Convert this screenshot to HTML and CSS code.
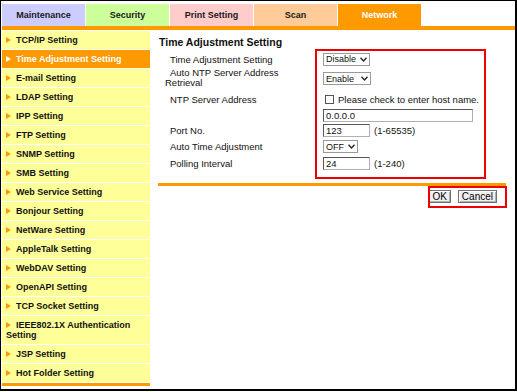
FILE: index.html
```html
<!DOCTYPE html>
<html>
<head>
	<title>Network - Time Adjustment Setting</title>
	<link rel="stylesheet" href="styles.css">
</head>
<body>
<div class="frame">
	<div class="tabs">
		<div class="tab maint">Maintenance</div>
		<div class="tab secu">Security</div>
		<div class="tab print">Print Setting</div>
		<div class="tab scan">Scan</div>
		<div class="tab net">Network</div>
	</div>
	<div class="tabline"></div>
	<div class="main">
		<ul class="side">
			<li><span class="arrow"></span>TCP/IP Setting</li>
			<li class="on"><span class="arrow"></span>Time Adjustment Setting</li>
			<li><span class="arrow"></span>E-mail Setting</li>
			<li><span class="arrow"></span>LDAP Setting</li>
			<li><span class="arrow"></span>IPP Setting</li>
			<li><span class="arrow"></span>FTP Setting</li>
			<li><span class="arrow"></span>SNMP Setting</li>
			<li><span class="arrow"></span>SMB Setting</li>
			<li><span class="arrow"></span>Web Service Setting</li>
			<li><span class="arrow"></span>Bonjour Setting</li>
			<li><span class="arrow"></span>NetWare Setting</li>
			<li><span class="arrow"></span>AppleTalk Setting</li>
			<li><span class="arrow"></span>WebDAV Setting</li>
			<li><span class="arrow"></span>OpenAPI Setting</li>
			<li><span class="arrow"></span>TCP Socket Setting</li>
			<li><span class="arrow"></span>IEEE802.1X Authentication Setting</li>
			<li><span class="arrow"></span>JSP Setting</li>
			<li><span class="arrow"></span>Hot Folder Setting</li>
		</ul>
		<div class="content">
			<h2>Time Adjustment Setting</h2>
			<div class="form">
				<div class="lbl r1">Time Adjustment Setting</div>
				<div class="val r1"><span class="sel w47">Disable<svg width="7" height="5" viewBox="0 0 7 5"><path d="M0.5 0.7 L3.5 4 L6.5 0.7" fill="none" stroke="#222" stroke-width="1.3"/></svg></span></div>

				<div class="lbl r2 two">Auto NTP Server Address<br>Retrieval</div>
				<div class="val r2"><span class="sel w48">Enable<svg width="7" height="5" viewBox="0 0 7 5"><path d="M0.5 0.7 L3.5 4 L6.5 0.7" fill="none" stroke="#222" stroke-width="1.3"/></svg></span></div>

				<div class="lbl r3">NTP Server Address</div>
				<div class="val r3"><span class="chk"></span>Please check to enter host name.</div>

				<div class="lbl r4"></div>
				<div class="val r4"><input class="txt w150" value="0.0.0.0"></div>

				<div class="lbl r5">Port No.</div>
				<div class="val r5"><input class="txt w47" value="123"><span class="hint">(1-65535)</span></div>

				<div class="lbl r6">Auto Time Adjustment</div>
				<div class="val r6"><span class="sel w35">OFF<svg width="7" height="5" viewBox="0 0 7 5"><path d="M0.5 0.7 L3.5 4 L6.5 0.7" fill="none" stroke="#222" stroke-width="1.3"/></svg></span></div>

				<div class="lbl r7">Polling Interval</div>
				<div class="val r7"><input class="txt w47" value="24"><span class="hint">(1-240)</span></div>

				<div class="mark box1"></div>
			</div>
			<div class="rule"></div>
			<div class="btns">
				<button class="btn">OK</button>
				<button class="btn">Cancel</button>
				<div class="mark box2"></div>
			</div>
		</div>
	</div>
</div>
</body>
</html>
```
FILE: styles.css
```css
body{
	margin: 0;
	font-family: "Liberation Sans", Arial, sans-serif;
	color: #111;
}
.frame{
	width: 517px;
	height: 391px;
	box-sizing: border-box;
	border-style: solid;
	border-color: #000;
	border-width: 1px 2px 2px 1px;
	padding: 3px 0 0 1px;
	background: #fff;
	overflow: hidden;
}
.tabs{
	display: flex;
	gap: 1px;
	height: 22px;
}
.tab{
	width: 83px;
	line-height: 22px;
	text-align: center;
	font-size: 9px;
	font-weight: bold;
	color: #1a1a1a;
}
.maint{ background: #ccccff; }
.secu{ background: #ccff99; }
.print{ background: #ffcccc; }
.scan{ background: #ffcc99; }
.net{ background: #ff9900; color: #fff; }
.tabline{
	height: 4px;
	background: #ff9900;
}
.main{
	display: flex;
	padding-top: 1px;
}
.side{
	list-style: none;
	margin: 0;
	padding: 0;
	width: 148px;
	border-bottom: 3px solid #ff9900;
	align-self: flex-start;
}
.side li{
	background: #ffff99;
	margin-bottom: 1px;
	padding: 4px 2px 4px 4px;
	line-height: 10px;
	font-size: 9px;
	font-weight: bold;
	color: #111;
}
.arrow{
	display: inline-block;
	width: 0;
	height: 0;
	border-left: 5px solid #ff9900;
	border-top: 3.5px solid transparent;
	border-bottom: 3.5px solid transparent;
	margin-right: 5px;
	vertical-align: 0;
}
.side li.on{
	background: #ff9900;
	color: #fff;
}
.side li.on .arrow{
	border-left-color: #fff;
}
.content{
	width: 348px;
	padding: 5px 0 0 8px;
}
.content h2{
	margin: 0 0 0 1px;
	font-size: 10.5px;
	line-height: 13px;
	color: #111;
}
.form{
	position: relative;
	display: grid;
	grid-template-columns: 158px auto;
	grid-template-rows: 18px 21px 20px 13px 16px 17px 16px;
	margin: 1px 0 0 7px;
	font-size: 9.5px;
}
.lbl, .val{
	display: flex;
	align-items: center;
}
.lbl{
	padding-left: 5px;
}
.lbl.two{
	display: block;
	padding-left: 0;
	text-indent: 5px;
	line-height: 10px;
}
.sel{
	display: inline-flex;
	align-items: center;
	justify-content: space-between;
	box-sizing: border-box;
	height: 13px;
	padding: 0 2px 0 2px;
	border: 1px solid #9a9a9a;
	background: #fff;
	font-size: 9px;
}
.w47{ width: 47px; }
.w48{ width: 48px; }
.w35{ width: 35px; }
.w150{ width: 150px; }
.txt{
	box-sizing: border-box;
	height: 13px;
	margin: 0;
	padding: 0 2px;
	border: 1px solid;
	border-color: #555 #b0b0b0 #b0b0b0 #555;
	font-family: "Liberation Sans", Arial, sans-serif;
	font-size: 9.5px;
	color: #111;
}
.hint{
	margin-left: 4px;
}
.chk{
	display: inline-block;
	width: 9px;
	height: 9px;
	box-sizing: border-box;
	border: 1px solid #555;
	margin: 0 4px 0 2px;
}
.mark{
	position: absolute;
	border: 2px solid #ee0000;
	box-sizing: border-box;
}
.box1{
	left: 150px;
	top: -1px;
	width: 171px;
	height: 130px;
}
.rule{
	height: 3px;
	margin-top: 12px;
	background: #ff9900;
}
.btns{
	position: relative;
	display: flex;
	justify-content: flex-end;
	gap: 7px;
	padding: 4px 9px 0 0;
}
.btn{
	height: 13px;
	margin: 0;
	padding: 0 3px;
	font-family: "Liberation Sans", Arial, sans-serif;
	font-size: 10px;
	line-height: 11px;
	color: #000;
	background: #f0f0f0;
	border: 1px solid #707070;
	box-shadow: inset 1px 1px 0 #fff, inset -1px -1px 0 #b0b0b0;
}
.box2{
	right: -1px;
	top: 0;
	width: 79px;
	height: 22px;
}
```
